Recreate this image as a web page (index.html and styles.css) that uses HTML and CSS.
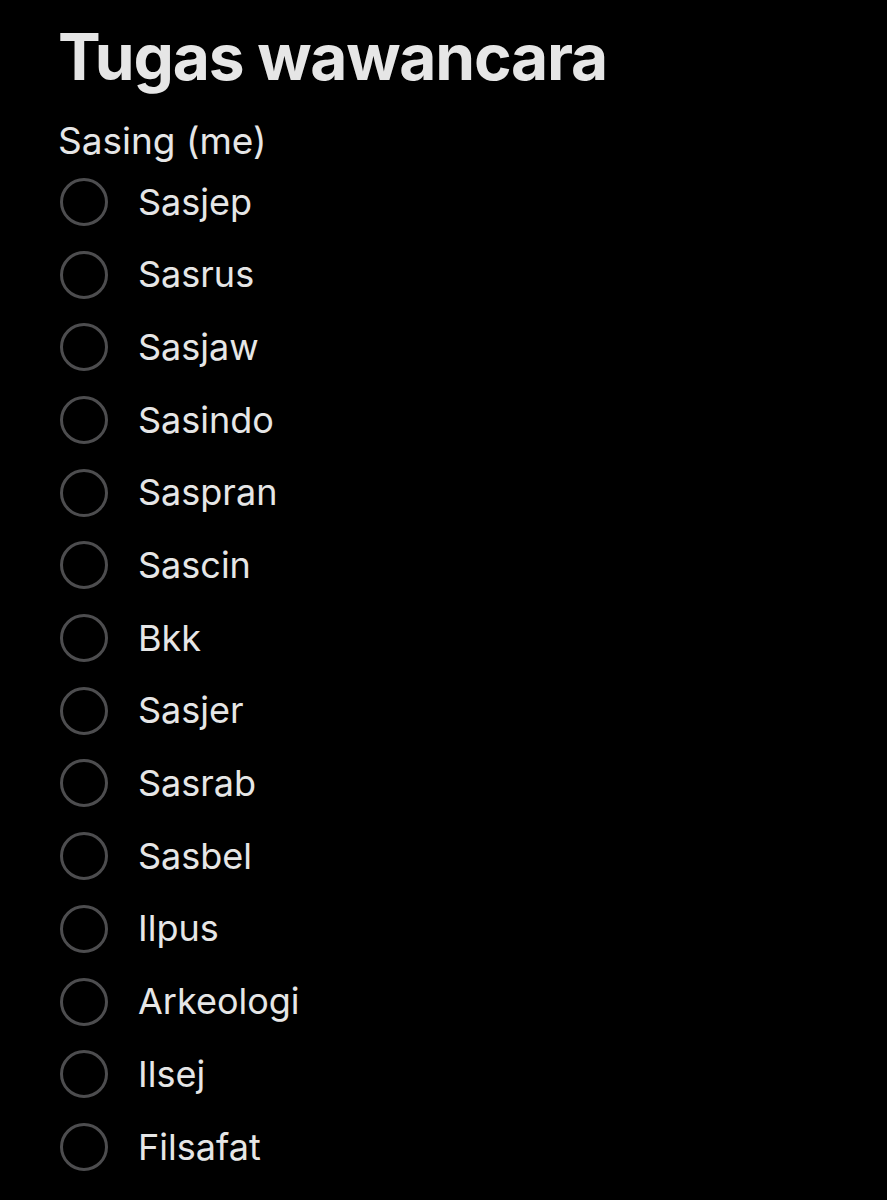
FILE: index.html
```html
<!DOCTYPE html>
<html lang="id">
<head>
    <meta charset="UTF-8">
    <title>Tugas wawancara</title>
    <link rel="stylesheet" href="styles.css">
</head>
<body>

<div class="page">
    <h1>Tugas wawancara</h1>
    <p class="owner">Sasing (me)</p>
    <ul class="task-list">
        <li><span class="check"></span>Sasjep</li>
        <li><span class="check"></span>Sasrus</li>
        <li><span class="check"></span>Sasjaw</li>
        <li><span class="check"></span>Sasindo</li>
        <li><span class="check"></span>Saspran</li>
        <li><span class="check"></span>Sascin</li>
        <li><span class="check"></span>Bkk</li>
        <li><span class="check"></span>Sasjer</li>
        <li><span class="check"></span>Sasrab</li>
        <li><span class="check"></span>Sasbel</li>
        <li><span class="check"></span>Ilpus</li>
        <li><span class="check"></span>Arkeologi</li>
        <li><span class="check"></span>Ilsej</li>
        <li><span class="check"></span>Filsafat</li>
    </ul>
</div>

</body>
</html>
```

FILE: styles.css
```css
body {
    margin: 0;
    padding: 0;
    background-color: #000;
    color: #e6e6e6;
    font-family: Inter, "Noto Sans", sans-serif;
}
.page {
    padding: 21px 0 0 58px;
}
h1 {
    margin: 0;
    font-size: 64px;
    line-height: 72px;
    font-weight: 700;
    letter-spacing: -1.2px;
}
.owner {
    margin: 26px 0 0;
    font-size: 37px;
    line-height: 44px;
}
.task-list {
    list-style: none;
    margin: 2.6px 0 0;
    padding: 0;
}
.task-list li {
    display: flex;
    align-items: center;
    height: 72.7px;
    font-size: 36px;
    line-height: 72.7px;
}
.check {
    box-sizing: border-box;
    width: 48px;
    height: 48px;
    margin: 0 30px 0 2px;
    border: 3px solid #4d4d4f;
    border-radius: 50%;
    flex-shrink: 0;
}
```
